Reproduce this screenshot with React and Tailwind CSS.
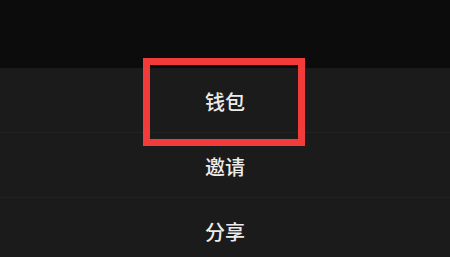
export default function App() {
  const items = ["钱包", "邀请", "分享"];
  return (
    <div
      className="relative h-[257px] w-[450px] overflow-hidden bg-[#1b1b1b]"
      style={{ fontFamily: '"Noto Sans CJK SC", "Noto Sans", sans-serif' }}
    >
      <div className="h-[68px] bg-[#0c0c0c]" />
      <ul>
        {items.map((label) => (
          <li
            key={label}
            className="flex h-[65px] items-center justify-center border-b border-[#222222] pt-[3px] text-[20px] font-medium text-[#ececec]"
          >
            {label}
          </li>
        ))}
      </ul>
      <div className="pointer-events-none absolute left-[143px] top-[58px] h-[88px] w-[162px] border-[7px] border-[#f23b3b]" />
    </div>
  );
}
